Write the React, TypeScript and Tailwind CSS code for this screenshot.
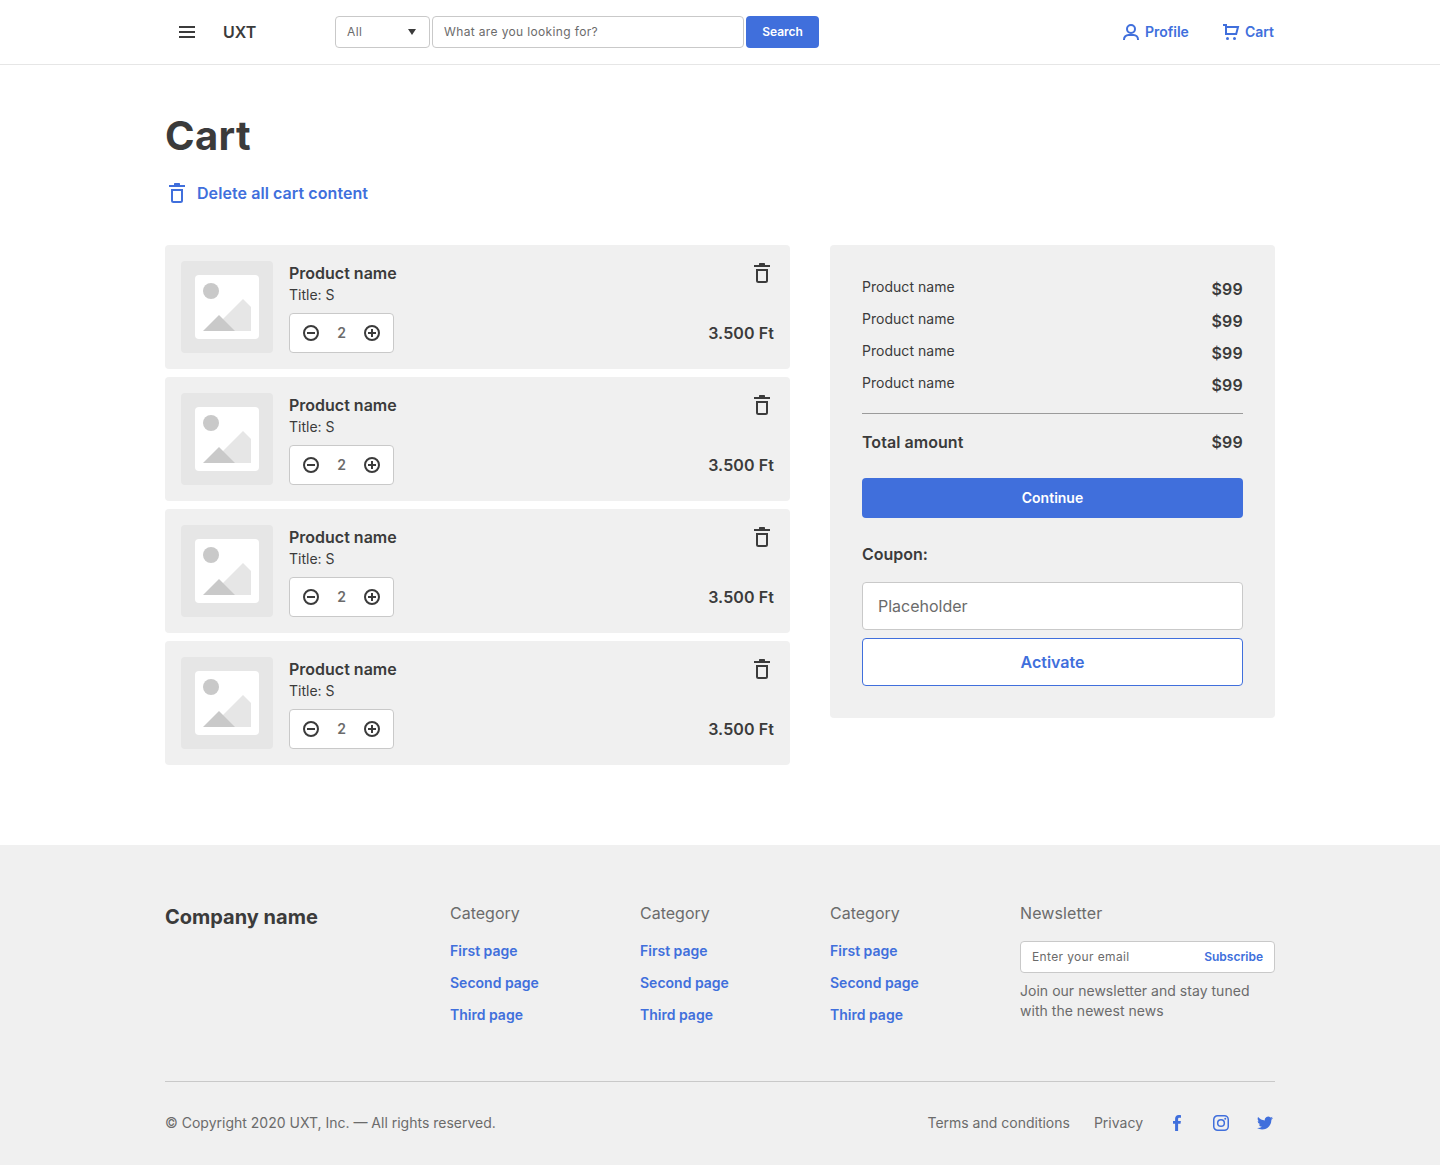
import React from 'react'

const cartItems = [
  { id: 1, name: 'Product name', title: 'Title: S', quantity: 2, price: '3.500 Ft' },
  { id: 2, name: 'Product name', title: 'Title: S', quantity: 2, price: '3.500 Ft' },
  { id: 3, name: 'Product name', title: 'Title: S', quantity: 2, price: '3.500 Ft' },
  { id: 4, name: 'Product name', title: 'Title: S', quantity: 2, price: '3.500 Ft' }
]

const footerPages = ['First page', 'Second page', 'Third page']

/* Icons */
const MenuIcon = () => (
  <svg className="w-6 h-6" viewBox="0 0 24 24" fill="currentColor">
    <path d="M4 6h16v2H4zM4 11h16v2H4zM4 16h16v2H4z" />
  </svg>
)

const TrashIcon = () => (
  <svg className="w-6 h-6 shrink-0" viewBox="0 0 24 24" fill="none">
    <path d="M9 2.7a.7.7 0 0 1 .7-.7h4.6a.7.7 0 0 1 .7.7V4h5v2H4V4h5z" fill="currentColor" />
    <path d="M7 9h10v10.5a1.5 1.5 0 0 1-1.5 1.5h-7A1.5 1.5 0 0 1 7 19.5z" stroke="currentColor" strokeWidth="2" />
  </svg>
)

const ProfileIcon = () => (
  <svg className="w-5 h-5" viewBox="2 2 20 20" fill="none" stroke="currentColor" strokeWidth="2">
    <circle cx="12" cy="9" r="4" />
    <path d="M5 20v-.5A4.5 4.5 0 0 1 9.5 15h5a4.5 4.5 0 0 1 4.5 4.5v.5" />
  </svg>
)

const CartIcon = () => (
  <svg className="w-5 h-5" viewBox="2 2 20 20" fill="none">
    <path d="M4 5h3v9h10.2L19 7H7" stroke="currentColor" strokeWidth="2" />
    <circle cx="8.5" cy="18.5" r="1.5" fill="currentColor" />
    <circle cx="15.5" cy="18.5" r="1.5" fill="currentColor" />
  </svg>
)

const CircleIcon = ({ plus = false }: { plus?: boolean }) => (
  <svg className="w-5 h-5" viewBox="0 0 20 20" fill="none" stroke="currentColor" strokeWidth="2">
    <circle cx="10" cy="10" r="7" />
    <path d={plus ? 'M6 10h8M10 6v8' : 'M6 10h8'} />
  </svg>
)

const FacebookIcon = () => (
  <svg className="w-5 h-5" viewBox="0 0 20 20" fill="currentColor">
    <path d="M8.1 18v-7.2H6V8h2.1V5.800C8.1 3.300 9.500 2 11.700 2c1 0 1.900.1 2.300.2v2.600h-1.500c-1.200 0-1.400.6-1.400 1.400V8h2.800l-.4 2.800h-2.400V18z" />
  </svg>
)

const InstagramIcon = () => (
  <svg className="w-5 h-5" viewBox="0 0 20 20" fill="none" stroke="currentColor" strokeWidth="1.5">
    <rect x="2.75" y="2.75" width="14.5" height="14.5" rx="3.8" />
    <circle cx="10" cy="10" r="3.35" />
    <circle cx="14.25" cy="5.75" r="1" fill="currentColor" stroke="none" />
  </svg>
)

const TwitterIcon = () => (
  <svg className="w-5 h-5" viewBox="0 0 20 20" fill="currentColor">
    <path
      transform="translate(2 2) scale(.66667)"
      d="M23.953 4.570a10 10 0 0 1-2.825.775 4.958 4.958 0 0 0 2.163-2.723c-.951.555-2.005.959-3.127 1.184a4.920 4.920 0 0 0-8.384 4.482C7.690 8.095 4.067 6.130 1.640 3.162a4.822 4.822 0 0 0-.666 2.475c0 1.710.870 3.213 2.188 4.096a4.904 4.904 0 0 1-2.228-.616v.06a4.923 4.923 0 0 0 3.946 4.827 4.996 4.996 0 0 1-2.212.085 4.936 4.936 0 0 0 4.604 3.417 9.867 9.867 0 0 1-6.102 2.105c-.390 0-.779-.023-1.170-.067a13.995 13.995 0 0 0 7.557 2.209c9.053 0 13.998-7.496 13.998-13.985 0-.210 0-.420-.015-.630A9.935 9.935 0 0 0 24 4.590z"
    />
  </svg>
)

const Header = () => (
  <header className="h-[65px] border-b border-[#e6e6e6]">
    <div className="w-[1110px] h-16 mx-auto flex items-center">
      <button className="ml-2.5">
        <MenuIcon />
      </button>
      <span className="w-28 ml-6 font-semibold">UXT</span>

      {/* Search */}
      <form className="flex gap-0.5 text-xs">
        <button
          type="button"
          className="w-[95px] h-8 pl-[11px] pr-[13px] flex items-center justify-between border border-[#c9c9c9] rounded text-[#6b6b6b] tracking-[0.36px]"
        >
          All
          <svg className="w-2 h-1.5 text-[#3b3b3b]" viewBox="0 0 8 6" fill="currentColor">
            <path d="M0 0h8L4 6z" />
          </svg>
        </button>
        <input
          className="w-[312px] h-8 px-[11px] pb-0.5 border border-[#c9c9c9] rounded tracking-[0.36px] placeholder:text-[#6b6b6b]"
          placeholder="What are you looking for?"
        />
        <button type="button" className="w-[73px] h-8 rounded bg-[#406fdc] text-white font-semibold">
          Search
        </button>
      </form>

      <nav className="ml-auto mr-px flex items-center gap-8 text-sm font-semibold text-[#406fdc]">
        <a href="#" className="flex items-center gap-1">
          <ProfileIcon />
          Profile
        </a>
        <a href="#" className="flex items-center gap-1">
          <CartIcon />
          Cart
        </a>
      </nav>
    </div>
  </header>
)

const ProductImage = () => (
  <div className="w-[92px] h-[92px] rounded bg-[#e6e6e6] flex items-center justify-center">
    <svg className="w-16 h-16" viewBox="0 0 64 64">
      <rect width="64" height="64" rx="4" fill="#fff" />
      <circle cx="16" cy="16" r="8" fill="#c9c9c9" />
      <path d="M16 56l32-32 8 8v24z" fill="#e6e6e6" />
      <path d="M8 56l16-16 16 16z" fill="#c9c9c9" />
    </svg>
  </div>
)

const CartItem = ({ item }: { item: (typeof cartItems)[number] }) => (
  <li className="flex gap-4 p-4 rounded bg-[#f0f0f0]">
    <ProductImage />
    <div>
      <h2 className="leading-6 font-semibold">{item.name}</h2>
      <p className="text-sm leading-5">{item.title}</p>
      <div className="w-[105px] h-10 mt-2 px-[11px] flex items-center justify-between border border-[#c9c9c9] rounded bg-white">
        <button>
          <CircleIcon />
        </button>
        <span className="text-sm font-semibold text-[#6b6b6b]">{item.quantity}</span>
        <button>
          <CircleIcon plus />
        </button>
      </div>
    </div>
    <div className="ml-auto flex flex-col items-end justify-between">
      <button>
        <TrashIcon />
      </button>
      <span className="mb-2 leading-6 font-semibold tracking-[0.1px]">{item.price}</span>
    </div>
  </li>
)

const Summary = () => (
  <aside className="w-[445px] p-8 rounded bg-[#f0f0f0]">
    <ul className="flex flex-col gap-2">
      {cartItems.map((item) => (
        <li key={item.id} className="flex items-start justify-between">
          <span className="text-sm leading-5 tracking-[0.03px]">{item.name}</span>
          <span className="leading-6 font-semibold tracking-[0.2px]">$99</span>
        </li>
      ))}
    </ul>
    <div className="mt-4 pt-4 flex justify-between border-t border-[#9b9b9b] leading-6 font-semibold">
      <span className="tracking-[0.05px]">Total amount</span>
      <span className="tracking-[0.2px]">$99</span>
    </div>
    <button className="w-full h-10 mt-6 rounded bg-[#406fdc] text-sm text-white font-semibold">Continue</button>

    {/* Coupon */}
    <h3 className="mt-6 leading-6 font-semibold">Coupon:</h3>
    <input
      className="block w-full h-12 mt-4 px-[15px] border border-[#c9c9c9] rounded bg-white placeholder:text-[#6b6b6b]"
      placeholder="Placeholder"
    />
    <button className="w-full h-12 mt-2 border border-[#406fdc] rounded bg-white text-[#406fdc] font-semibold">
      Activate
    </button>
  </aside>
)

const FooterCategory = () => (
  <div className="w-[190px]">
    <h4 className="leading-6 text-[#6b6b6b]">Category</h4>
    <ul className="mt-4 flex flex-col gap-3 text-sm leading-5 font-semibold text-[#406fdc]">
      {footerPages.map((page) => (
        <li key={page}>
          <a href="#">{page}</a>
        </li>
      ))}
    </ul>
  </div>
)

const Footer = () => (
  <footer className="h-80 pt-14 bg-[#f0f0f0]">
    <div className="w-[1110px] mx-auto">
      <div className="flex">
        <div className="w-[285px] text-xl leading-8 font-bold">Company name</div>
        <FooterCategory />
        <FooterCategory />
        <FooterCategory />
        <div className="w-[255px] text-[#6b6b6b]">
          <h4 className="leading-6 tracking-[0.12px]">Newsletter</h4>
          <form className="h-8 mt-4 px-[11px] flex items-center justify-between border border-[#c9c9c9] rounded bg-white text-xs">
            <input
              className="w-40 tracking-[0.36px] placeholder:text-[#6b6b6b]"
              placeholder="Enter your email"
            />
            <button type="button" className="font-semibold text-[#406fdc]">
              Subscribe
            </button>
          </form>
          <p className="mt-2 text-sm leading-5 tracking-[0.03px]">
            Join our newsletter and stay tuned
            <br />
            with the newest news
          </p>
        </div>
      </div>

      {/* Bottom bar */}
      <div className="mt-14 pt-[31px] flex items-center border-t border-[#c9c9c9] text-sm leading-5 text-[#6b6b6b]">
        <span>© Copyright 2020 UXT, Inc. — All rights reserved.</span>
        <div className="ml-auto flex items-center gap-6">
          <a href="#">Terms and conditions</a>
          <a href="#">Privacy</a>
          <a href="#" className="text-[#406fdc]">
            <FacebookIcon />
          </a>
          <a href="#" className="text-[#406fdc]">
            <InstagramIcon />
          </a>
          <a href="#" className="text-[#406fdc]">
            <TwitterIcon />
          </a>
        </div>
      </div>
    </div>
  </footer>
)

export default function App() {
  return (
    <div className="min-h-[1165px] bg-white font-['Inter',sans-serif] text-base text-[#3b3b3b]">
      <Header />
      <main className="w-[1110px] mx-auto pt-[47px] pb-20">
        <h1 className="text-[40px] leading-[48px] font-bold tracking-[0.4px]">Cart</h1>
        <button className="mt-[21px] flex items-center gap-2 font-semibold tracking-[0.07px] text-[#406fdc]">
          <TrashIcon />
          Delete all cart content
        </button>
        <div className="mt-10 flex items-start gap-10">
          <ul className="w-[625px] flex flex-col gap-2">
            {cartItems.map((item) => (
              <CartItem key={item.id} item={item} />
            ))}
          </ul>
          <Summary />
        </div>
      </main>
      <Footer />
    </div>
  )
}
